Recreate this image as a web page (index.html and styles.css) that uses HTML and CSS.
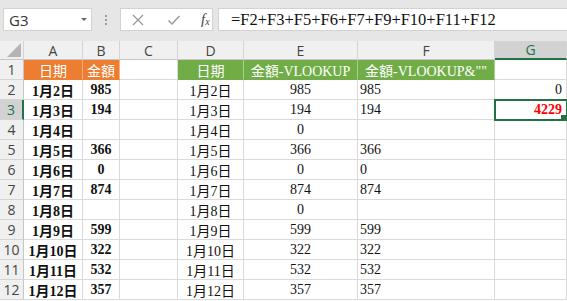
FILE: index.html
```html
<!DOCTYPE html>
<html>
<head>
<meta charset="utf-8">
<link rel="stylesheet" href="styles.css">
</head>
<body>
<div class="topbar">
  <div class="namebox"><span>G3</span><span class="caret"></span></div>
  <div class="sep"><i></i><i></i><i></i></div>
  <div class="fxbox">
    <svg class="ico" width="14" height="14" viewBox="0 0 14 14"><path d="M2 2L12 12M12 2L2 12" stroke="#9a9a9a" stroke-width="1.3" fill="none"/></svg>
    <svg class="ico" width="14" height="14" viewBox="0 0 14 14"><path d="M1.5 7.5L5 11L12.5 3" stroke="#9a9a9a" stroke-width="1.5" fill="none"/></svg>
    <span class="fx">f<sub>x</sub></span>
  </div>
  <div class="input">=F2+F3+F5+F6+F7+F9+F10+F11+F12</div>
</div>
<div class="sheet">
  <div class="h corner"><span class="tri"></span></div>
  <div class="h">A</div><div class="h">B</div><div class="h">C</div><div class="h">D</div><div class="h">E</div><div class="h">F</div><div class="h hsel">G</div>

  <div class="rn">1</div>
  <div class="c or">日期</div><div class="c or">金額</div><div class="c"></div>
  <div class="c gr">日期</div><div class="c gr">金額-VLOOKUP</div><div class="c gr">金額-VLOOKUP&amp;""</div><div class="c"></div>

  <div class="rn">2</div>
  <div class="c b">1月2日</div><div class="c b">985</div><div class="c"></div>
  <div class="c">1月2日</div><div class="c">985</div><div class="c l">985</div><div class="c r">0</div>

  <div class="rn rsel">3</div>
  <div class="c b">1月3日</div><div class="c b">194</div><div class="c"></div>
  <div class="c">1月3日</div><div class="c">194</div><div class="c l">194</div><div class="c r red sel">4229</div>

  <div class="rn">4</div>
  <div class="c b">1月4日</div><div class="c b"></div><div class="c"></div>
  <div class="c">1月4日</div><div class="c">0</div><div class="c l"></div><div class="c"></div>

  <div class="rn">5</div>
  <div class="c b">1月5日</div><div class="c b">366</div><div class="c"></div>
  <div class="c">1月5日</div><div class="c">366</div><div class="c l">366</div><div class="c"></div>

  <div class="rn">6</div>
  <div class="c b">1月6日</div><div class="c b">0</div><div class="c"></div>
  <div class="c">1月6日</div><div class="c">0</div><div class="c l">0</div><div class="c"></div>

  <div class="rn">7</div>
  <div class="c b">1月7日</div><div class="c b">874</div><div class="c"></div>
  <div class="c">1月7日</div><div class="c">874</div><div class="c l">874</div><div class="c"></div>

  <div class="rn">8</div>
  <div class="c b">1月8日</div><div class="c b"></div><div class="c"></div>
  <div class="c">1月8日</div><div class="c">0</div><div class="c l"></div><div class="c"></div>

  <div class="rn">9</div>
  <div class="c b">1月9日</div><div class="c b">599</div><div class="c"></div>
  <div class="c">1月9日</div><div class="c">599</div><div class="c l">599</div><div class="c"></div>

  <div class="rn">10</div>
  <div class="c b">1月10日</div><div class="c b">322</div><div class="c"></div>
  <div class="c">1月10日</div><div class="c">322</div><div class="c l">322</div><div class="c"></div>

  <div class="rn">11</div>
  <div class="c b">1月11日</div><div class="c b">532</div><div class="c"></div>
  <div class="c">1月11日</div><div class="c">532</div><div class="c l">532</div><div class="c"></div>

  <div class="rn">12</div>
  <div class="c b">1月12日</div><div class="c b">357</div><div class="c"></div>
  <div class="c">1月12日</div><div class="c">357</div><div class="c l">357</div><div class="c"></div>
</div>
</body>
</html>
```

FILE: styles.css
```css
html, body {
  margin: 0;
  padding: 0;
  background: #fff;
}
body {
  width: 567px;
  height: 301px;
  overflow: hidden;
}
.topbar {
  height: 41px;
  box-sizing: border-box;
  background: #e6e6e6;
  display: flex;
  align-items: flex-start;
  padding-top: 8px;
}
.namebox {
  margin-left: 3px;
  width: 89px;
  height: 23px;
  box-sizing: border-box;
  background: #fff;
  border: 1px solid #d2d2d2;
  display: flex;
  align-items: center;
  justify-content: space-between;
  padding: 0 4px 0 5px;
  font: 15px "Open Sans", "Liberation Sans", sans-serif;
  color: #333;
}
.caret {
  width: 0;
  height: 0;
  border-left: 3px solid transparent;
  border-right: 3px solid transparent;
  border-top: 3px solid #666;
}
.sep {
  width: 28px;
  height: 23px;
  display: flex;
  flex-direction: column;
  align-items: center;
  justify-content: center;
  gap: 2px;
}
.sep i {
  display: block;
  width: 2px;
  height: 2px;
  background: #9a9a9a;
}
.fxbox {
  width: 93px;
  height: 23px;
  box-sizing: border-box;
  background: #fff;
  border: 1px solid #d2d2d2;
  display: flex;
  align-items: center;
  padding-left: 10px;
  gap: 22px;
}
.ico {
  display: block;
}
.fx {
  font: italic 15px "Liberation Serif", serif;
  color: #444;
  margin-left: -2px;
}
.fx sub {
  font-size: 10px;
  vertical-align: -1px;
}
.input {
  margin-left: 5px;
  flex: 1;
  height: 23px;
  box-sizing: border-box;
  background: #fff;
  border: 1px solid #d2d2d2;
  border-right: none;
  padding-left: 12px;
  font: 16.5px "Liberation Serif", serif;
  color: #111;
  line-height: 21px;
  white-space: nowrap;
  overflow: hidden;
}
.sheet {
  display: grid;
  grid-template-columns: 24px 59px 37px 58px 66px 114px 137px 72px;
  grid-template-rows: 19px repeat(12, 20px);
}
.h, .rn {
  background: #f0f0f0;
  border-right: 1px solid #d4d4d4;
  border-bottom: 1px solid #c6c6c6;
  box-sizing: border-box;
  display: flex;
  align-items: center;
  justify-content: center;
  font: 14px "Open Sans", "Liberation Sans", sans-serif;
  color: #444;
}
.rn {
  border-bottom: 1px solid #d4d4d4;
  border-right: 1px solid #c6c6c6;
}
.corner {
  position: relative;
}
.tri {
  position: absolute;
  right: 2px;
  bottom: 2px;
  width: 0;
  height: 0;
  border-left: 14px solid transparent;
  border-bottom: 14px solid #b4b4b4;
}
.hsel {
  background: #d2d2d2;
  color: #217346;
  border-bottom: 2px solid #217346;
}
.rsel {
  background: #d2d2d2;
  color: #217346;
  border-right: 2px solid #217346;
}
.c {
  border-right: 1px solid #dadada;
  border-bottom: 1px solid #dadada;
  box-sizing: border-box;
  display: flex;
  align-items: center;
  justify-content: center;
  font: 14px "Liberation Serif", "Noto Sans CJK TC", serif;
  color: #111;
  white-space: nowrap;
  overflow: hidden;
  padding-top: 1px;
}
.c.b {
  font-weight: bold;
}
.c.l {
  justify-content: flex-start;
  padding-left: 2px;
}
.c.r {
  justify-content: flex-end;
  padding-right: 4px;
}
.or {
  background: #ed7d31;
  color: #fff;
  border-right-color: #f4b183;
  border-bottom-color: #ed7d31;
}
.gr {
  background: #70ad47;
  color: #fff;
  border-right-color: #a9d08e;
  border-bottom-color: #70ad47;
}
.red {
  color: #ff0000;
  font-weight: bold;
}
.sel {
  position: relative;
  outline: 2px solid #217346;
  outline-offset: -1px;
}
.sel::after {
  content: "";
  position: absolute;
  right: -1px;
  bottom: -2px;
  width: 5px;
  height: 5px;
  background: #217346;
  border: 1px solid #fff;
}
```
